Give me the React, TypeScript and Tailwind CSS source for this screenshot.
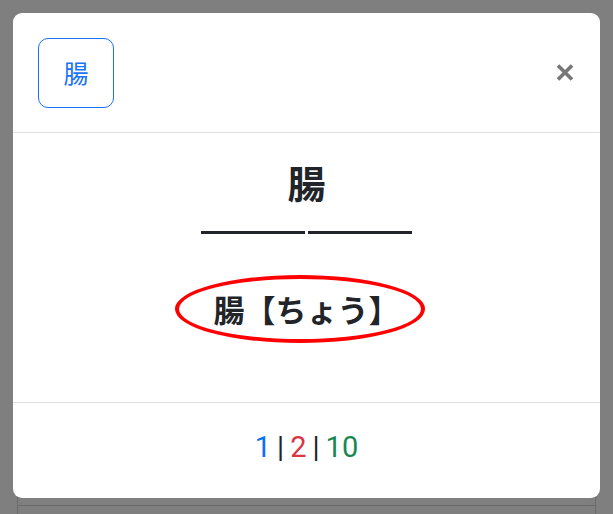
import React from "react";

const font = { fontFamily: '"Noto Sans CJK JP", "Noto Sans", sans-serif' };

export default function App() {
    return (
        <div className="relative w-[613px] h-[514px] overflow-hidden bg-[#7f7f7f]" style={font}>
            {/* page behind the backdrop */}
            <div className="px-[17px] pt-[497px]">
                <div className="border-l border-r border-[#6b6b6b]">
                    <div className="h-[9px] border-t border-b border-[#6b6b6b]"></div>
                    <div className="h-[10px]"></div>
                </div>
            </div>

            {/* modal */}
            <div className="absolute left-[13px] top-[13px] w-[587px] h-[485px] bg-white rounded-[9px] flex flex-col overflow-hidden">
                <div className="h-[120px] flex items-center justify-between pl-[25px] pr-[26px] border-b border-[#dee2e6]">
                    <button className="w-[76px] h-[70px] border-[1.5px] border-[#1a73f5] rounded-[10px] text-[#1a73f5] text-[25px] flex items-center justify-center">
                        腸
                    </button>
                    <svg width="18" height="17" viewBox="0 0 18 17">
                        <path d="M2 1.5 L16 15.5 M16 1.5 L2 15.5" stroke="#777" strokeWidth="3.6" strokeLinecap="butt" />
                    </svg>
                </div>

                <div className="relative h-[270px] flex flex-col items-center pt-[26px] border-b border-[#dee2e6] text-[#212529]">
                    <div className="text-[38px] font-bold leading-[1.2]">腸</div>
                    <div className="flex gap-[3px] mt-[26px]">
                        <div className="w-[104px] h-[3px] bg-[#212529]"></div>
                        <div className="w-[104px] h-[3px] bg-[#212529]"></div>
                    </div>
                    <div className="text-[31px] font-bold leading-[1.2] mt-[56px]">腸【ちょう】</div>
                    <div className="absolute left-[162px] top-[142px] w-[250px] h-[68px] border-4 border-[#ff0000] rounded-[50%]"></div>
                </div>

                <div className="flex-1 flex items-center justify-center pb-[6px] text-[29px] text-[#212529] font-['Roboto',sans-serif]">
                    <span className="text-[#0d6efd]">1</span>
                    <span className="mx-[6px]">|</span>
                    <span className="text-[#dc3545]">2</span>
                    <span className="mx-[6px]">|</span>
                    <span className="text-[#198754]">10</span>
                </div>
            </div>
        </div>
    );
}
